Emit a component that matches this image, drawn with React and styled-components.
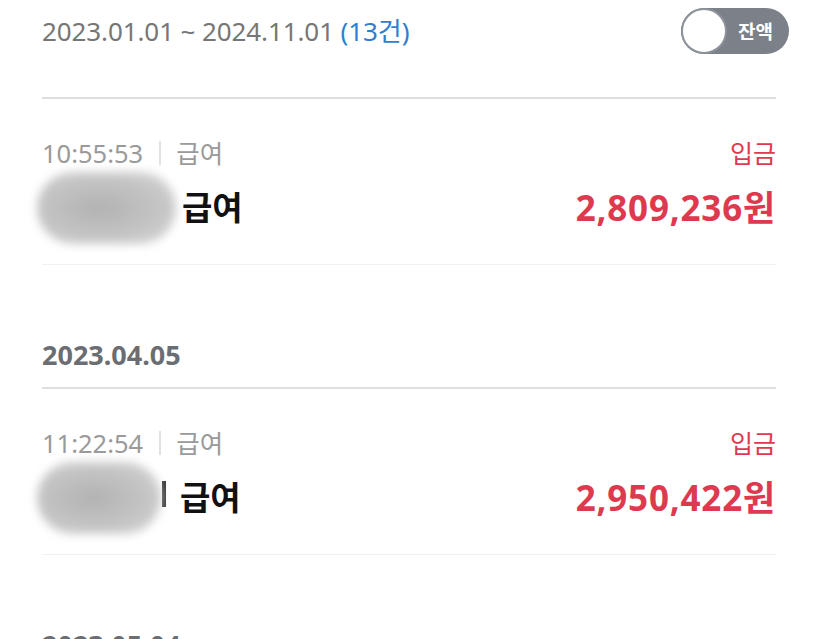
import React from 'react';
import styled, { createGlobalStyle } from 'styled-components';

const items = [
  { date: null, time: '10:55:53', memo: '급여', title: '급여', type: '입금', amount: '2,809,236원', blur: 139, tail: false },
  { date: '2023.04.05', time: '11:22:54', memo: '급여', title: '급여', type: '입금', amount: '2,950,422원', blur: 124, tail: true },
];

export default function App() {
  return (
    <>
      <GlobalStyle />
      <Page>
        <Header>
          <Range>
            2023.01.01 ~ 2024.11.01 <Count>(13건)</Count>
          </Range>
          <Toggle>
            <Knob />
            <ToggleLabel>잔액</ToggleLabel>
          </Toggle>
        </Header>
        <HeavyLine />
        {items.map((r, i) => (
          <React.Fragment key={i}>
            {r.date && (
              <>
                <DateHead>{r.date}</DateHead>
                <HeavyLine />
              </>
            )}
            <Item>
              <Meta>
                {r.time}
                <Bar />
                {r.memo}
              </Meta>
              <Type>{r.type}</Type>
              <Title>
                <Blur w={r.blur} />
                {r.tail && <Tail />}
                {r.title}
              </Title>
              <Amount>{r.amount}</Amount>
            </Item>
            <LightLine />
          </React.Fragment>
        ))}
        <DateHead>2023.05.04</DateHead>
      </Page>
    </>
  );
}

const GlobalStyle = createGlobalStyle`
body {
    margin: 0;
    background: #FFFFFF;
    font-family: "Noto Sans", "Noto Sans CJK KR", sans-serif;
    overflow: hidden;
}
`

const Page = styled.main`
    width: 820px;
    height: 639px;
    padding: 0 44px 0 42px;
    box-sizing: border-box;
    overflow: hidden;
`

const Header = styled.div`
    height: 97px;
    display: flex;
    justify-content: space-between;
    align-items: flex-start;
    padding-top: 8px;
    box-sizing: border-box;
`

const Range = styled.div`
    font-size: 26px;
    line-height: 46px;
    color: #767676;
    letter-spacing: -0.1px;
`

const Count = styled.span`
    color: #2f7fd1;
`

const Toggle = styled.div`
    position: relative;
    width: 108px;
    height: 46px;
    margin-right: -13px;
    border-radius: 23px;
    background: #7b8089;
    display: flex;
    align-items: center;
    justify-content: flex-end;
    padding-right: 16px;
    box-sizing: border-box;
`

const Knob = styled.div`
    position: absolute;
    left: 0;
    top: 0;
    width: 46px;
    height: 46px;
    border-radius: 50%;
    background: #FFFFFF;
    border: 2px solid #8d939b;
    box-sizing: border-box;
`

const ToggleLabel = styled.span`
    color: #FFFFFF;
    font-weight: 700;
    font-size: 19px;
`

const HeavyLine = styled.div`
    height: 2px;
    background: #dedede;
`

const LightLine = styled.div`
    height: 1px;
    background: #f1f1f1;
`

const Item = styled.div`
    display: grid;
    grid-template-columns: 1fr auto;
    grid-template-rows: 28px 40px;
    row-gap: 21px;
    padding: 40px 0 36px;
`

const Meta = styled.div`
    display: flex;
    align-items: center;
    font-size: 25.5px;
    line-height: 28px;
    color: #9a9a9a;
`

const Bar = styled.span`
    width: 2px;
    height: 24px;
    background: #e2e2e2;
    margin: 0 15px 0 16px;
`

const Type = styled.div`
    font-size: 25px;
    line-height: 28px;
    color: #de3a4f;
    text-align: right;
`

const Title = styled.div`
    display: flex;
    align-items: center;
    font-size: 33px;
    line-height: 40px;
    font-weight: 700;
    color: #111111;
`

const Blur = styled.span`
    width: ${p => p.w}px;
    height: 72px;
    margin: -16px 6px -16px -5px;
    border-radius: 36px;
    background: radial-gradient(ellipse at 45% 50%, #b2b2b2 0%, #c4c4c4 55%, #dadada 100%);
    filter: blur(5px);
    flex: none;
`

const Tail = styled.span`
    width: 4px;
    height: 26px;
    margin: -8px 14px 0 -5px;
    background: #3a3a3a;
    flex: none;
`

const Amount = styled.div`
    font-size: 35px;
    line-height: 40px;
    font-weight: 700;
    color: #de3a4f;
    text-align: right;
    letter-spacing: 0.8px;
`

const DateHead = styled.div`
    padding: 75px 0 17px;
    font-size: 27px;
    line-height: 30px;
    font-weight: 700;
    color: #6a6d72;
`
